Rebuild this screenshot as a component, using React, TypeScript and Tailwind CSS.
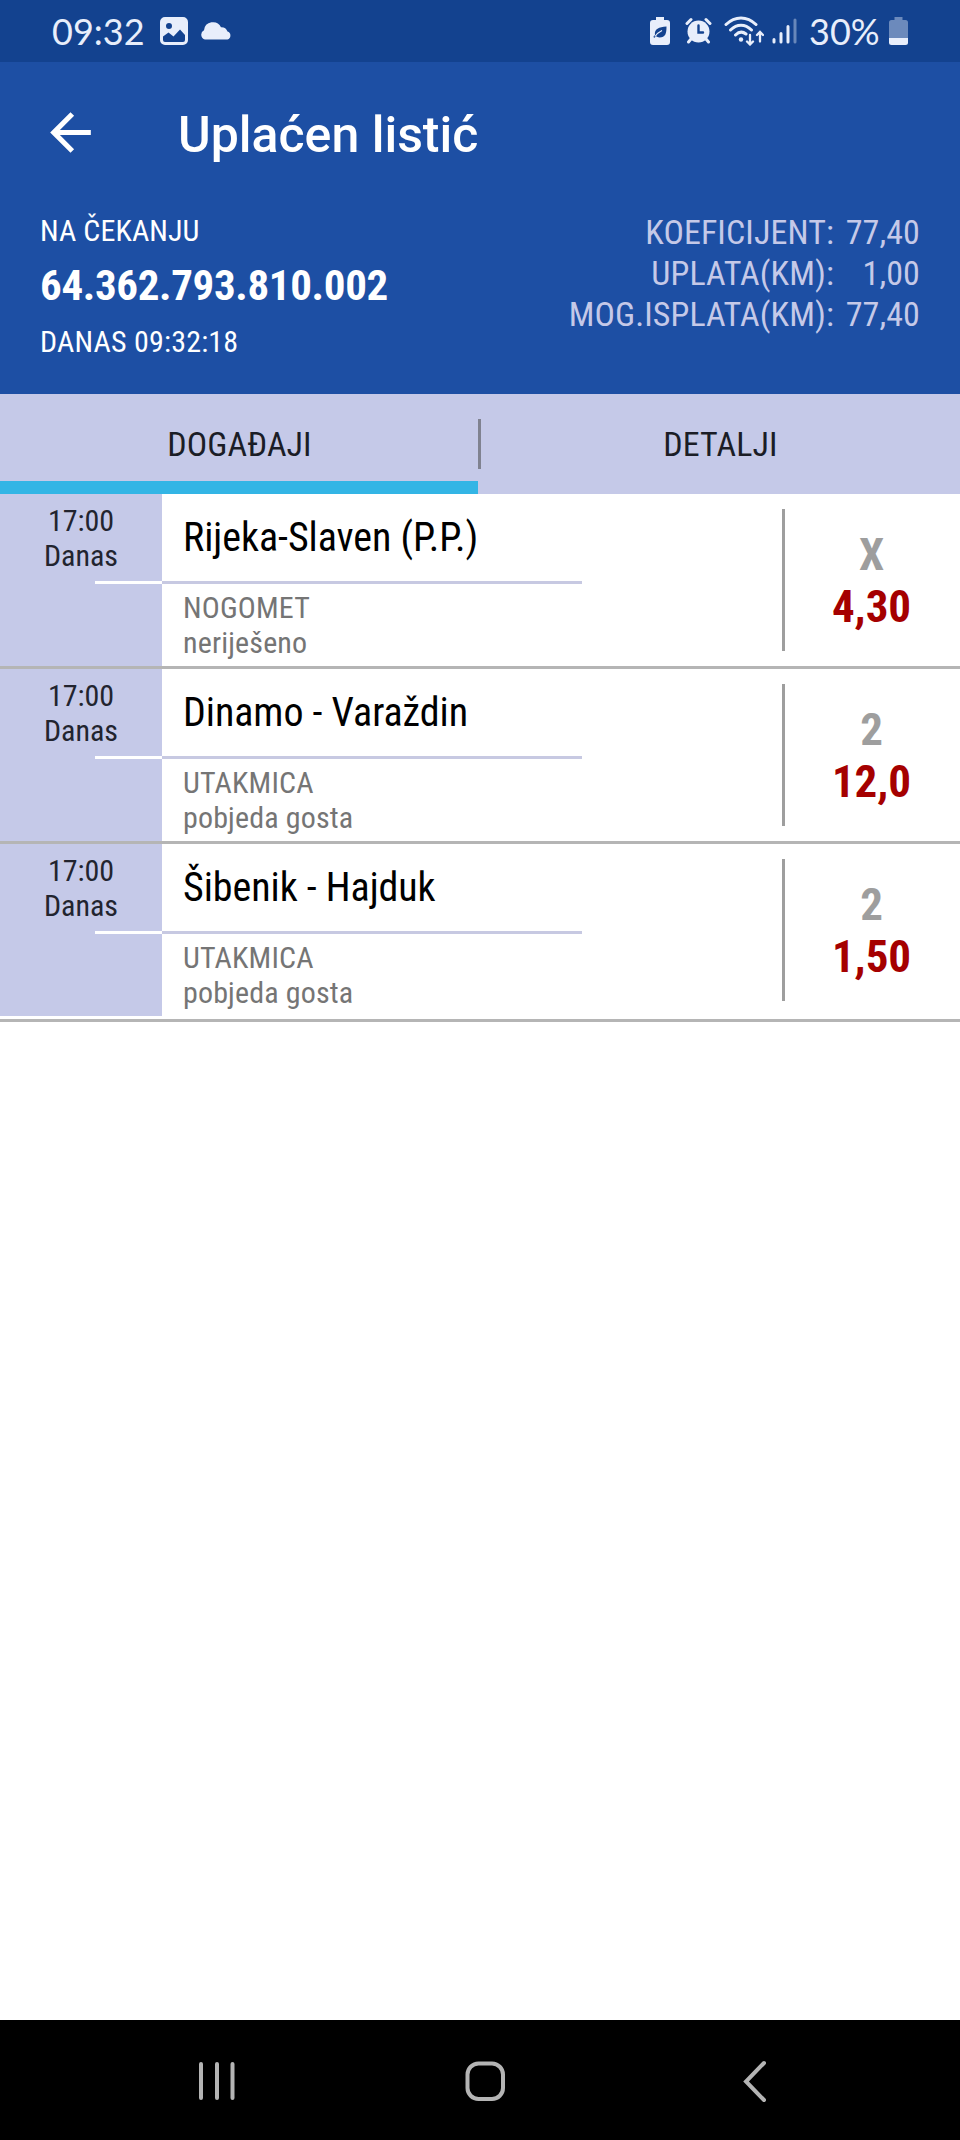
const matches = [
  { time: '17:00', day: 'Danas', teams: 'Rijeka-Slaven (P.P.)', game: 'NOGOMET', bet: 'neriješeno', pick: 'X', odd: '4,30' },
  { time: '17:00', day: 'Danas', teams: 'Dinamo - Varaždin', game: 'UTAKMICA', bet: 'pobjeda gosta', pick: '2', odd: '12,0' },
  { time: '17:00', day: 'Danas', teams: 'Šibenik - Hajduk', game: 'UTAKMICA', bet: 'pobjeda gosta', pick: '2', odd: '1,50' },
];

const totals = [
  { label: 'KOEFICIJENT:', value: '77,40' },
  { label: 'UPLATA(KM):', value: '1,00' },
  { label: 'MOG.ISPLATA(KM):', value: '77,40' },
];

function StatusBar() {
  return (
    <div className="flex h-[62px] items-center justify-between bg-[#13428f] pl-[52px] pr-[52px] text-[#e8eefb] font-[Lato,sans-serif] text-[36px] leading-[62px]">
      <div className="flex items-center">
        <span className="w-[108px]">09:32</span>
        {/* gallery */}
        <svg className="h-7 w-7" viewBox="0 0 28 28" fill="currentColor">
          <path fillRule="evenodd" d="M5 0h18a5 5 0 0 1 5 5v18a5 5 0 0 1-5 5H5a5 5 0 0 1-5-5V5a5 5 0 0 1 5-5zM9 6a3 3 0 1 0 0 6a3 3 0 1 0 0-6zM3 19.500v3.500a2 2 0 0 0 2 2h18a2 2 0 0 0 2-2v-5l-5-5.500l-6.500 7l-5-4z" />
        </svg>
        {/* cloud */}
        <svg className="ml-3 h-[18px] w-8" viewBox="0 0 32 18" fill="currentColor">
          <path d="M5 17.500a5 5 0 0 1-1-9.300A9 9 0 0 1 21 5.200A6.500 6.500 0 0 1 27.500 9.500A4.200 4.200 0 0 1 27.500 17.500z" />
        </svg>
      </div>
      <div className="flex items-center">
        {/* power saving */}
        <svg className="h-7 w-5" viewBox="0 0 20 28" fill="currentColor">
          <path d="M6 0h8v3h3a3 3 0 0 1 3 3v19a3 3 0 0 1-3 3H3a3 3 0 0 1-3-3V6a3 3 0 0 1 3-3h3z" />
          <path d="M16.500 9.500c0 7-1 11-7 11c-1.600 0-2.500-.5-3.200-1.200L4 21l-.5-1.500l1.500-1.500C4 12 9 10 16.500 9.500z" fill="#13428f" />
          <path d="M5 19.500c2-3 4-4.500 7-6" stroke="currentColor" strokeWidth="1.300" fill="none" />
        </svg>
        {/* alarm */}
        <svg className="ml-[15px] h-7 w-[27px]" viewBox="0 0 27 28" fill="none" stroke="currentColor" strokeWidth="3" strokeLinecap="round">
          <circle cx="13.500" cy="14.500" r="11" fill="currentColor" stroke="none" />
          <path d="M2 6.500L6 2.500M25 6.500L21 2.500M6 22L3.500 25M21 22L23.500 25" />
          <path d="M13.500 8.500v7h4.500" stroke="#13428f" strokeWidth="2.400" />
        </svg>
        {/* wifi with traffic arrows */}
        <svg className="ml-[12px] h-[30px] w-10" viewBox="0 0 40 30" fill="none" stroke="currentColor" strokeWidth="3" strokeLinecap="round">
          <path d="M2 8.500C11-.2 23-.2 32 8.500M6.500 14C13 7.500 21 7.500 27.500 14M11.500 19C15 15.500 19 15.500 22 18" />
          <circle cx="17" cy="23.500" r="2.200" fill="currentColor" stroke="none" />
          <path d="M26 19v9M23 25.500l3 3l3-3M36 25.500v-9M33 19l3-3l3 3" strokeWidth="2.300" />
        </svg>
        {/* signal */}
        <svg className="ml-2 h-7 w-[26px]" viewBox="0 0 26 28" stroke="currentColor" strokeWidth="3" strokeLinecap="round">
          <path d="M2 22.500v2.500M9 16.500v8.500M16 9.500v15.500" />
          <path d="M23 3v22" opacity=".4" />
        </svg>
        <span className="ml-[11px] w-[80px]">30%</span>
        {/* battery */}
        <svg className="h-7 w-[19px]" viewBox="0 0 19 28" fill="currentColor">
          <path opacity=".42" d="M5.500 0h8v3h3a2.500 2.500 0 0 1 2.500 2.500V21H0V5.500A2.500 2.500 0 0 1 2.500 3h3z" />
          <path d="M0 21h19v4.500a2.500 2.500 0 0 1-2.500 2.500h-14A2.500 2.500 0 0 1 0 25.500z" />
        </svg>
      </div>
    </div>
  );
}

function Header() {
  return (
    <header className="h-[332px] bg-[#1d4fa4] text-white">
      <div className="flex h-[140px] items-center pl-10">
        <svg className="h-[61px] w-[61px]" viewBox="0 0 24 24" fill="currentColor">
          <path d="M20 11H7.830l5.590-5.590L12 4l-8 8 8 8 1.410-1.410L7.830 13H20v-2z" />
        </svg>
        <h1 className="ml-[77px] pt-1.5 font-[Roboto] text-[50px] font-medium [font-stretch:100%]">Uplaćen listić</h1>
      </div>
      <div className="flex justify-between pl-10 pr-10">
        <div>
          <div className="mt-[9px] text-[30px] leading-[40px] tracking-[0.1px]">NA ČEKANJU</div>
          <div className="text-[43px] font-bold leading-[69px] tracking-[-0.35px]">64.362.793.810.002</div>
          <div className="pt-0.5 text-[30px] leading-[40px] tracking-[0.2px]">DANAS 09:32:18</div>
        </div>
        <div className="mt-[10px] text-[34px] leading-[41px] tracking-[0.1px] text-[#c5c9e8]">
          {totals.map(({ label, value }) => (
            <div key={label} className="flex justify-end">
              <span>{label}</span>
              <span className="w-[86px] text-right">{value}</span>
            </div>
          ))}
        </div>
      </div>
    </header>
  );
}

function Tabs() {
  return (
    <div className="flex h-[100px] items-start bg-[#c5c9e8] text-[34px] leading-[101px] text-[#1b1d26]">
      <div className="flex h-full w-[478px] flex-col">
        <div className="h-[87px] pl-px text-center tracking-[0.1px]">DOGAĐAJI</div>
        <div className="h-[13px] bg-[#33b5e5]" />
      </div>
      <div className="mt-[25px] h-[50px] w-[3px] bg-[#808290]" />
      <div className="flex-1 text-center tracking-[0.1px]">DETALJI</div>
    </div>
  );
}

export default function App() {
  return (
    <div className="flex h-[2140px] w-[960px] flex-col overflow-hidden bg-white font-['Roboto_Condensed',Roboto,sans-serif] [font-stretch:75%]">
      <StatusBar />
      <Header />
      <Tabs />
      {matches.map(({ time, day, teams, game, bet, pick, odd }, i) => (
        <div key={teams}>
          <div className="flex h-[172px]">
            <div className="w-[162px] bg-[#c5c9e8] pt-[9px] text-center text-[30px] leading-[35px] text-[#22242f]">
              <div>{time}</div>
              <div>{day}</div>
              <div className="mt-2 ml-[95px] h-[3px] bg-white" />
            </div>
            <div className="w-[420px]">
              <div className="h-[87px] pl-[21px] text-[40px] leading-[88px] tracking-[-0.05px]">{teams}</div>
              <div className="h-[3px] bg-[#c7c9e2]" />
              <div className="pl-[21px] pt-[6px] text-[30px] leading-[35px] tracking-[0.15px] text-[#757575]">
                <div>{game}</div>
                <div>{bet}</div>
              </div>
            </div>
            <div className="mt-[15px] ml-[200px] h-[142px] w-[3px] bg-[#9e9e9e]" />
            <div className="flex-1 pt-[35px] pr-[2px] text-center text-[45px] font-bold leading-[52px]">
              <div className="text-[#9e9e9e]">{pick}</div>
              <div className="text-[#a50000]">{odd}</div>
            </div>
          </div>
          {/* the last divider sits a little below its row */}
          <div className={i === matches.length - 1 ? 'mt-[3px] h-[3px] bg-[#b5b5b5]' : 'h-[3px] bg-[#b5b5b5]'} />
        </div>
      ))}
      <div className="mt-auto flex h-[120px] bg-black">
        <svg className="h-full w-full" viewBox="0 0 960 120" fill="none" stroke="#b4b4b4" strokeWidth="4" strokeLinecap="round">
          <path d="M201 44v34M217 44v34M232.500 44v34" />
          <rect x="467.500" y="43.500" width="35.500" height="35.500" rx="11" />
          <path d="M764 43L746 61.500L764 80" />
        </svg>
      </div>
    </div>
  );
}
